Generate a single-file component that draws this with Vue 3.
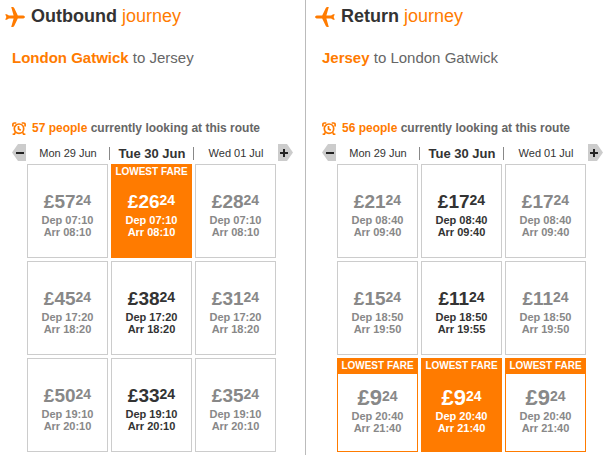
<script setup>
const days = ['Mon 29 Jun', 'Tue 30 Jun', 'Wed 01 Jul']

const fare = (pounds, dep, arr, lowest = false) => ({ pounds, dep, arr, lowest })

const journeys = [
  {
    id: 'outbound',
    name: 'Outbound',
    from: 'London Gatwick',
    to: 'Jersey',
    people: 57,
    rows: [
      [fare(57, '07:10', '08:10'), fare(26, '07:10', '08:10', true), fare(28, '07:10', '08:10')],
      [fare(45, '17:20', '18:20'), fare(38, '17:20', '18:20'), fare(31, '17:20', '18:20')],
      [fare(50, '19:10', '20:10'), fare(33, '19:10', '20:10'), fare(35, '19:10', '20:10')],
    ],
  },
  {
    id: 'return',
    name: 'Return',
    from: 'Jersey',
    to: 'London Gatwick',
    people: 56,
    rows: [
      [fare(21, '08:40', '09:40'), fare(17, '08:40', '09:40'), fare(17, '08:40', '09:40')],
      [fare(15, '18:50', '19:50'), fare(11, '18:50', '19:55'), fare(11, '18:50', '19:50')],
      [fare(9, '20:40', '21:40', true), fare(9, '20:40', '21:40', true), fare(9, '20:40', '21:40', true)],
    ],
  },
]
</script>

<template>
  <main class="journeys">
    <section v-for="j in journeys" :key="j.id" class="journey">
      <h2 class="title">
        <svg class="plane" :class="{ back: j.id === 'return' }" viewBox="0 0 20 20" aria-hidden="true">
          <path d="M20 10c0-.9-1.200-1.500-2.600-1.500h-4.600L9.200.9Q8.700 0 7.600 0H6.200l2.400 8.500H3.900L1.800 7.200H.2L1.400 10 .2 12.800h1.600l2.100-1.300h4.700L6.200 20h1.400q1.100 0 1.600-.9l3.600-7.600h4.600c1.400 0 2.600-.6 2.600-1.500z" />
        </svg>
        <span><strong>{{ j.name }}</strong> <span class="accent">journey</span></span>
      </h2>
      <p class="route"><strong class="accent">{{ j.from }}</strong> to {{ j.to }}</p>
      <p class="people">
        <svg class="clock" viewBox="0 0 14 13" aria-hidden="true">
          <circle cx="7" cy="6.700" r="4.700" />
          <path d="M6.500 4v3l2.300 1.300M.9 4.400V2.600Q.9 1 2.500 1h1.800M13.100 4.400V2.600Q13.100 1 11.500 1H9.700M3.600 10.200L2 12.200M10.400 10.200l1.600 2M.6 12.300h2.600M13.400 12.300h-2.600" />
        </svg>
        <span><span class="accent">{{ j.people }} people</span> currently looking at this route</span>
      </p>
      <div class="board">
        <button class="step" type="button" aria-label="Previous day">
          <svg viewBox="0 0 15 17" aria-hidden="true">
            <path class="tag" d="M14 0H6L0 8.500 6 17h8z" />
            <path class="sign" d="M4 9h8" />
          </svg>
        </button>
        <table class="fares">
          <thead>
            <tr>
              <th v-for="(d, i) in days" :key="d" scope="col" :class="{ chosen: i === 1 }">{{ d }}</th>
            </tr>
          </thead>
          <tbody>
            <tr v-for="(row, r) in j.rows" :key="r">
              <td v-for="(f, i) in row" :key="i">
                <button class="fare" :class="{ chosen: i === 1, lowest: f.lowest }" type="button">
                  <span class="flag">{{ f.lowest ? 'LOWEST FARE' : '' }}</span>
                  <span class="price" :class="{ big: f.pounds < 10 }">£{{ f.pounds }}<span class="pence">24</span></span>
                  <span class="time">Dep {{ f.dep }}</span>
                  <span class="time">Arr {{ f.arr }}</span>
                </button>
              </td>
            </tr>
          </tbody>
        </table>
        <button class="step" type="button" aria-label="Next day">
          <svg viewBox="0 0 15 17" aria-hidden="true">
            <path class="tag" d="M0 0h9l6 8.500L9 17H0z" />
            <path class="sign" d="M2 9h8M6 5v8" />
          </svg>
        </button>
      </div>
    </section>
  </main>
</template>

<style>
body {
  margin: 0;
  background: #fff;
}
</style>

<style scoped>
.journeys {
  display: flex;
  min-height: 100vh;
  font-family: "Liberation Sans", Arial, sans-serif;
  color: #666;
}

.journey {
  flex: 1 1 0;
  padding: 5px 4px 0 16px;
}

.journey:first-child {
  padding: 5px 12px 0 12px;
  border-right: 1px solid #bbb;
}

.accent {
  color: #ff7b00;
}

.title {
  display: flex;
  align-items: flex-end;
  gap: 6px;
  margin: 0 0 0 -7px;
  font-size: 18px;
  line-height: 22px;
  font-weight: normal;
}

.title strong {
  color: #333;
}

.plane {
  width: 20px;
  height: 20px;
  fill: #ff7b00;
}

.plane.back {
  transform: scaleX(-1);
}

.route {
  margin: 21px 0 0;
  font-size: 15px;
  line-height: 20px;
}

.people {
  display: flex;
  align-items: center;
  gap: 6px;
  margin: 52px 0 0;
  font-size: 12px;
  line-height: 16px;
  font-weight: bold;
}

.clock {
  width: 14px;
  height: 13px;
  fill: none;
  stroke: #ff7b00;
  stroke-width: 1.7;
}

.board {
  display: grid;
  grid-template-columns: 15px 1fr 15px;
  align-items: start;
  margin-top: 8px;
}

.step {
  display: block;
  width: 15px;
  height: 17px;
  padding: 0;
  border: 0;
  background: none;
  cursor: pointer;
}

.step svg {
  display: block;
  width: 15px;
  height: 17px;
}

.tag {
  fill: #ccc;
}

.sign {
  fill: none;
  stroke: #222;
  stroke-width: 2;
}

.fares {
  width: calc(100% + 4px);
  margin: -3px -1px 0 -3px;
  table-layout: fixed;
  border-collapse: separate;
  border-spacing: 3px;
}

th,
td {
  padding: 0;
}

th {
  position: relative;
  padding: 2px 0 0 1px;
  font-size: 11px;
  line-height: 15px;
  font-weight: normal;
  color: #333;
  white-space: nowrap;
}

th.chosen {
  font-size: 13px;
  font-weight: bold;
}

th:not(:last-child)::after {
  content: "";
  position: absolute;
  top: 3px;
  right: -2px;
  width: 1px;
  height: 13px;
  background: #888;
}

.fare {
  display: flex;
  flex-direction: column;
  justify-content: flex-start;
  width: 100%;
  height: 94px;
  padding: 0;
  border: 1px solid #ccc;
  background: #fff;
  font: inherit;
  font-weight: bold;
  color: #888;
  text-align: center;
  cursor: pointer;
}

.fare.chosen {
  color: #333;
}

.fare.lowest {
  border-color: #ff7b00;
}

.fare.lowest.chosen {
  background: #ff7b00;
  color: #fff;
}

.flag {
  height: 15px;
  margin-bottom: 9px;
  font-size: 10px;
  line-height: 14px;
  color: #fff;
}

.lowest .flag {
  background: #ff7b00;
}

.price {
  height: 25px;
  font-size: 19px;
  line-height: 26px;
}

.price.big {
  height: 27px;
  font-size: 22px;
  line-height: 30px;
}

.pence {
  font-size: 14px;
  line-height: 1;
  vertical-align: 3px;
}

.big .pence {
  vertical-align: 4px;
}

.time {
  font-size: 11px;
  line-height: 12px;
}
</style>
